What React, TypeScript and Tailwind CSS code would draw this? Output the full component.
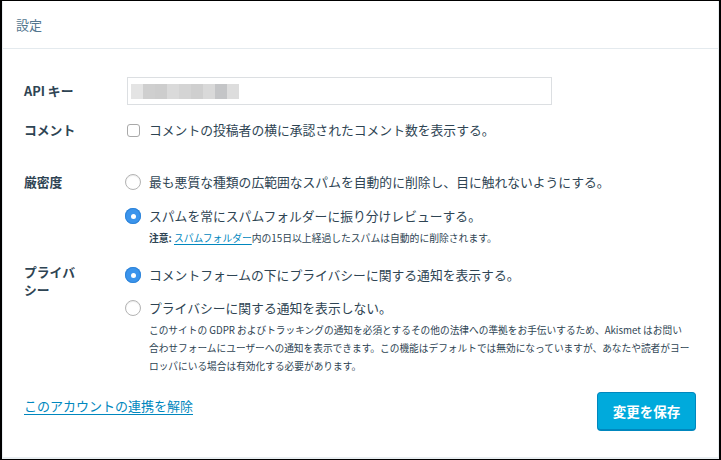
import React from "react";

const font = "font-['Noto_Sans_CJK_JP','Noto_Sans',sans-serif]";

function Radio({ checked }: { checked?: boolean }) {
  return checked ? (
    <span className="flex h-[16px] w-[16px] shrink-0 items-center justify-center rounded-full bg-[#3b94ec] shadow-[inset_0_0_0_1px_#2f84d8]">
      <span className="h-[5px] w-[5px] rounded-full bg-white" />
    </span>
  ) : (
    <span className="h-[16px] w-[16px] shrink-0 rounded-full border border-[#b3b3b3] bg-white shadow-[inset_0_1px_1px_rgba(0,0,0,0.08)]" />
  );
}

export default function App() {
  const blocks = [
    "#e4e4e4",
    "#cfcfcf",
    "#cdcdcd",
    "#dadada",
    "#d4d4d4",
    "#cfcfcf",
    "#d9d9d9",
    "#c4c5c7",
    "#dddddd",
  ];
  return (
    <div
      className={`${font} flex h-[460px] w-[721px] flex-col border-t border-b border-l-2 border-r-2 border-black bg-white text-[#2e4453]`}
    >
      <div className="flex flex-1 flex-col border-l border-r border-b-2 border-[#e9eef1]">
        <div className="flex h-[48px] items-center border-b border-[#e4eaee] px-[13px] text-[13px] text-[#52768f]">
          設定
        </div>

        <div className="flex flex-1 flex-col pl-[21px] pr-[22px]">
          {/* API key */}
          <div className="mt-[28px] flex items-center">
            <div className="w-[103px] text-[12.8px] font-bold leading-[20px]">
              API キー
            </div>
            <div className="flex h-[28px] w-[425px] items-center border border-[#dcdfe2] pl-[3px]">
              <div className="flex h-[15px]">
                {blocks.map((c, i) => (
                  <span
                    key={i}
                    className="h-[15px] w-[12px]"
                    style={{ backgroundColor: c }}
                  />
                ))}
              </div>
            </div>
          </div>

          {/* Comment */}
          <div className="mt-[15px] flex items-center">
            <div className="w-[103px] text-[12.8px] font-bold leading-[20px]">
              コメント
            </div>
            <span className="h-[13px] w-[13px] rounded-[3px] border border-[#a9a9a9] bg-white" />
            <span className="ml-[9px] text-[12.8px] leading-[20px]">
              コメントの投稿者の横に承認されたコメント数を表示する。
            </span>
          </div>

          {/* Strictness */}
          <div className="mt-[32px] flex">
            <div className="w-[101px] text-[12.8px] font-bold leading-[20px]">
              厳密度
            </div>
            <div className="flex flex-col">
              <div className="flex h-[20px] items-center">
                <Radio />
                <span className="ml-[8px] text-[12.8px] leading-[20px]">
                  最も悪質な種類の広範囲なスパムを自動的に削除し、目に触れないようにする。
                </span>
              </div>
              <div className="mt-[14px] flex h-[20px] items-center">
                <Radio checked />
                <span className="ml-[8px] text-[12.8px] leading-[20px]">
                  スパムを常にスパムフォルダーに振り分けレビューする。
                </span>
              </div>
              <div className="mt-[5px] pl-[24px] text-[9.8px] leading-[14px]">
                <span className="font-bold">注意:</span>{" "}
                <span className="text-[#0087be] underline underline-offset-2">
                  スパムフォルダー
                </span>
                内の15日以上経過したスパムは自動的に削除されます。
              </div>
            </div>
          </div>

          {/* Privacy */}
          <div className="mt-[18px] flex">
            <div className="w-[60px] text-[12.8px] font-bold leading-[18px]">
              プライバシー
            </div>
            <div className="ml-[41px] mt-[2px] flex flex-col">
              <div className="flex h-[20px] items-center">
                <Radio checked />
                <span className="ml-[8px] text-[12.8px] leading-[20px]">
                  コメントフォームの下にプライバシーに関する通知を表示する。
                </span>
              </div>
              <div className="mt-[13px] flex h-[20px] items-center">
                <Radio />
                <span className="ml-[8px] text-[12.8px] leading-[20px]">
                  プライバシーに関する通知を表示しない。
                </span>
              </div>
              <div className="mt-[3px] flex flex-col whitespace-nowrap pl-[24px] text-[9.7px] leading-[18px]">
                <span>
                  このサイトの GDPR およびトラッキングの通知を必須とするその他の法律への準拠をお手伝いするため、Akismet はお問い
                </span>
                <span>
                  合わせフォームにユーザーへの通知を表示できます。この機能はデフォルトでは無効になっていますが、あなたや読者がヨー
                </span>
                <span>ロッパにいる場合は有効化する必要があります。</span>
              </div>
            </div>
          </div>

          {/* Footer */}
          <div className="mt-[12px] flex items-start justify-between">
            <a className="mt-[9px] text-[13px] leading-[20px] text-[#0087be] underline underline-offset-[3px]">
              このアカウントの連携を解除
            </a>
            <button className="mt-[5px] flex h-[39px] w-[99px] items-center justify-center rounded-[4px] border border-b-2 border-[#0087be] bg-[#00aadc] text-[13.5px] font-bold text-white">
              変更を保存
            </button>
          </div>
        </div>
      </div>
    </div>
  );
}
